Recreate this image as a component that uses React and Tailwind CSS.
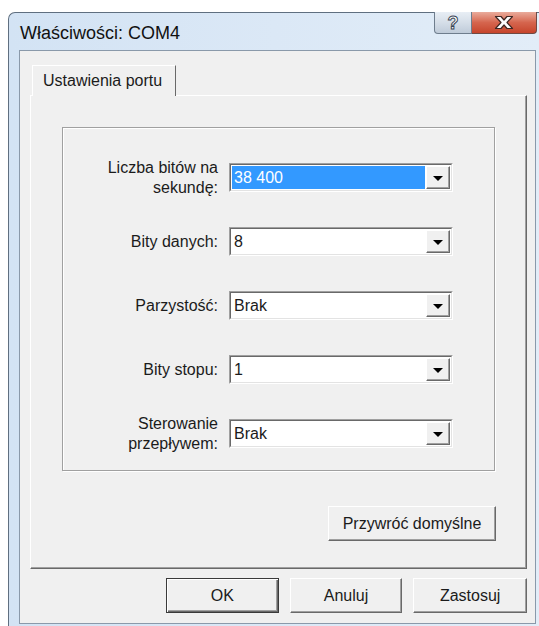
import React from 'react';

const rows = [
  { label: ['Liczba bitów na', 'sekundę:'], value: '38 400', selected: true },
  { label: ['Bity danych:'], value: '8' },
  { label: ['Parzystość:'], value: 'Brak' },
  { label: ['Bity stopu:'], value: '1' },
  { label: ['Sterowanie', 'przepływem:'], value: 'Brak' },
];

// sunken combo box with its little raised arrow button
const Combo = ({ value, selected }) => (
  <div className="w-[224px] h-[29px] border border-t-[#a0a0a0] border-l-[#a0a0a0] border-r-white border-b-white">
    <div className="h-full flex bg-white border border-t-[#696969] border-l-[#696969] border-r-[#e3e3e3] border-b-[#e3e3e3]">
      <div className="flex-1 flex p-px">
        <div
          className={`flex-1 flex items-center pl-[2px] text-[16px] leading-[20px] ${
            selected ? 'bg-[#3399ff] text-white' : 'text-[#1b1b1b]'
          }`}
        >
          {value}
        </div>
      </div>
      <div className="w-[24px] my-px mr-px flex items-center justify-center bg-[#f0f0f0] border border-t-white border-l-white border-r-[#696969] border-b-[#696969] shadow-[inset_-1px_-1px_0_#a0a0a0]">
        <div className="w-0 h-0 border-l-[5px] border-r-[5px] border-t-[5px] border-l-transparent border-r-transparent border-t-black mt-px" />
      </div>
    </div>
  </div>
);

const Button = ({ children, className = '', isDefault }) => (
  <button
    className={`h-[35px] flex items-center justify-center bg-[#f0f0f0] text-[16px] text-[#1b1b1b] ${
      isDefault
        ? 'border border-[#3a3a3a] shadow-[inset_1px_1px_0_#fff,inset_-1px_-1px_0_#696969,inset_-2px_-2px_0_#a0a0a0]'
        : 'border border-t-white border-l-white border-r-[#696969] border-b-[#696969] shadow-[inset_-1px_-1px_0_#a0a0a0]'
    } ${className}`}
  >
    {children}
  </button>
);

export default function App() {
  return (
    <div className="w-[539px] h-[626px] bg-white pt-[12px] pl-[8px] overflow-hidden font-['Liberation_Sans',Arial,sans-serif] text-[#1b1b1b]">
      <div className="h-full flex flex-col rounded-tl-[7px] border-l border-t border-[#5f6f80] bg-gradient-to-r from-[#d3e3f4] via-[#dbe8f6] to-[#e2edf8]">
        {/* title bar */}
        <div className="h-[37px] flex items-start">
          <div className="ml-[11px] mt-[9px] text-[18px] leading-[22px] text-[#111]">Właściwości: COM4</div>
          <div className="ml-auto mr-[2px] -mt-px flex h-[22px]">
            <div className="w-[38px] h-full flex items-center justify-center rounded-bl-[4px] border border-t-0 border-[#6e7d8d] bg-gradient-to-b from-[#e8eef5] via-[#d5dee8] to-[#bfcbd9]">
              <span className="text-[18px] font-bold leading-none text-white [-webkit-text-stroke:1px_#3a4656]">?</span>
            </div>
            <div className="w-[65px] h-full flex items-center justify-center rounded-br-[4px] border border-t-0 border-l-0 border-[#6e4a44] bg-gradient-to-b from-[#e9ab9b] via-[#d5654e] to-[#c6442b]">
              <svg width="22" height="15" viewBox="0 0 22 15">
                <path d="M2.5 1.5 L8 1.5 L11 5 L14 1.5 L19.5 1.5 L14 7.5 L19.5 13.5 L14 13.5 L11 10 L8 13.5 L2.5 13.5 L8 7.5 Z" fill="#fff" stroke="#3f2824" strokeWidth="1.2" strokeLinejoin="round" />
              </svg>
            </div>
          </div>
        </div>

        {/* client area */}
        <div className="ml-[10px] mr-[3px] mb-[2px] flex-1 flex flex-col border border-[#8a99aa] bg-[#f0f0f0] pl-[10px] pr-[8px] pt-[14px] pb-[10px]">
          <div className="ml-[2px] w-[144px] h-[31px] -mb-px relative z-10 flex items-center pl-[10px] bg-[#f0f0f0] border-t border-l border-white border-r border-r-[#696969] text-[16px]">
            Ustawienia portu
          </div>

          <div className="flex-1 flex flex-col bg-[#f0f0f0] border border-t-white border-l-white border-r-[#696969] border-b-[#696969] shadow-[inset_-1px_-1px_0_#a0a0a0] pl-[31px] pt-[31px]">
            <div className="w-[433px] h-[344px] border border-[#a0a0a0] shadow-[inset_1px_1px_0_#fff,1px_1px_0_#fff] pt-[35px]">
              <div className="flex flex-col gap-[35px]">
                {rows.map((row, i) => (
                  <div key={i} className="flex items-center h-[29px]">
                    <div className="w-[155px] text-right text-[16px] leading-[20px]">
                      {row.label.map((line, j) => (
                        <div key={j}>{line}</div>
                      ))}
                    </div>
                    <div className="ml-[11px]">
                      <Combo value={row.value} selected={row.selected} />
                    </div>
                  </div>
                ))}
              </div>
            </div>
            <Button className="mt-[35px] ml-[266px] w-[168px]">Przywróć domyślne</Button>
          </div>

          <div className="mt-[9px] flex gap-[11px] pl-[136px]">
            <Button isDefault className="w-[113px]">OK</Button>
            <Button className="w-[113px]">Anuluj</Button>
            <Button className="w-[114px]">Zastosuj</Button>
          </div>
        </div>
      </div>
    </div>
  );
}
